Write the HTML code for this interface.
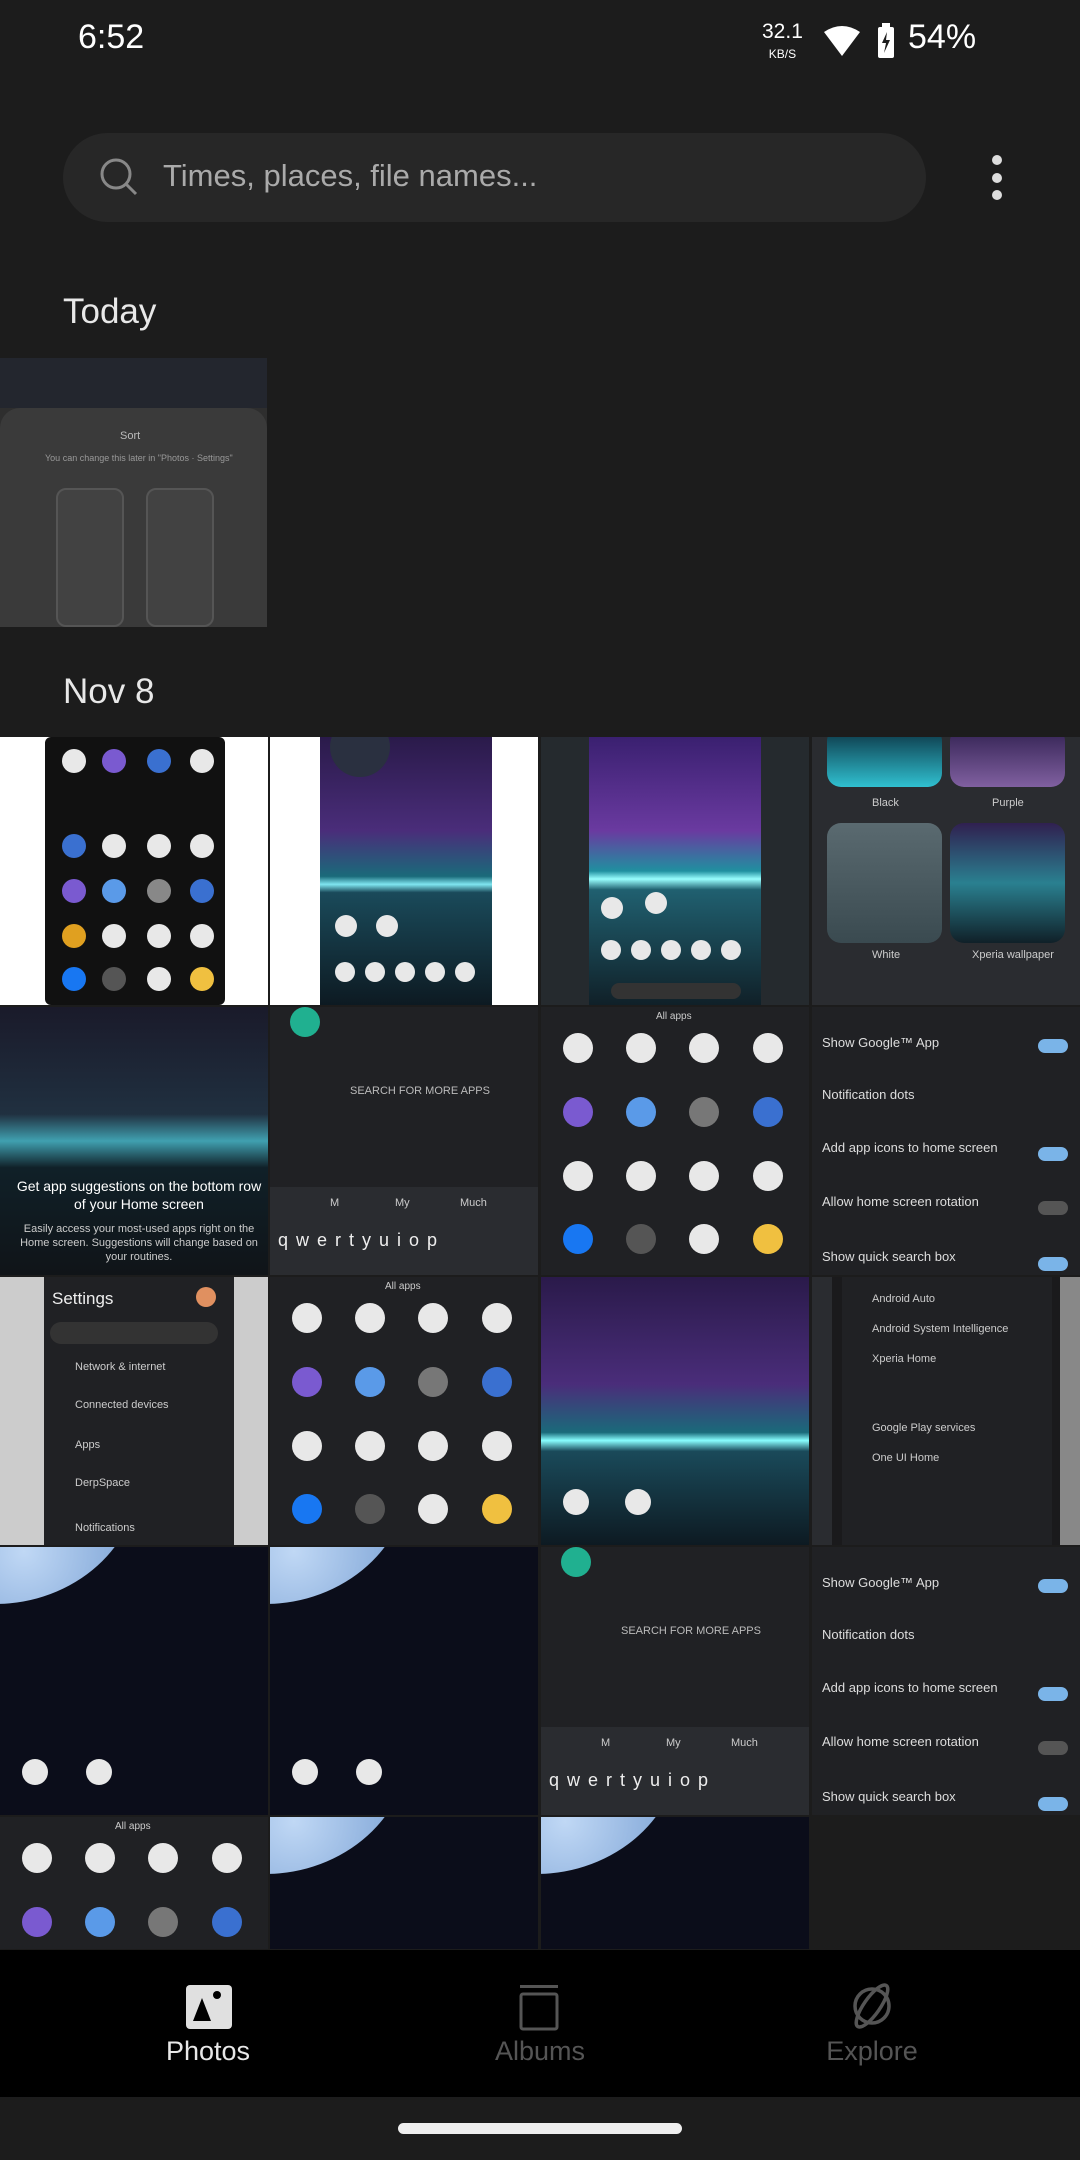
<!DOCTYPE html>
<html><head><meta charset="utf-8"><style>
*{margin:0;padding:0;box-sizing:border-box}
body{width:1080px;height:2160px;background:#1c1c1c;font-family:"Liberation Sans",sans-serif;position:relative;overflow:hidden;color:#fff}
.a{position:absolute}
.c{position:absolute;width:268px;height:268px;overflow:hidden;background:#202124}
.t{position:absolute;font-size:11px;color:#ccc}
.horizon{background:linear-gradient(180deg,#2a1a4a 0%,#4a2d7a 35%,#1a6a7a 52%,#7fe6f0 55%,#1a4a5a 58%,#0d1a22 100%)}
.planet{background:#0b0d1a}
.planet:before{content:"";position:absolute;left:-150px;top:-205px;width:290px;height:262px;border-radius:50%;background:radial-gradient(circle at 60% 80%,#c0d8f5,#5080c0 70%)}
.ic{position:absolute;width:30px;height:30px;border-radius:50%;background:#e8e8e8}
.row{position:absolute;left:10px;right:10px;font-size:13px;color:#ddd}
.tog{position:absolute;right:12px;width:30px;height:14px;border-radius:7px;background:#7ab4e8}
</style></head><body>
<div class="a" style="left:78px;top:18px;font-size:34px;font-weight:500">6:52</div>
<div class="a" style="left:762px;top:22px;font-size:21px;line-height:20px;text-align:center">32.1<br><span style="font-size:12px">KB/S</span></div>
<svg class="a" style="left:822px;top:24px" width="40" height="34" viewBox="0 0 40 34"><path d="M2 8 Q20 -4 38 8 L20 32 Z" fill="#fff"/></svg>
<svg class="a" style="left:875px;top:22px" width="22" height="38" viewBox="0 0 22 38"><rect x="3" y="5" width="16" height="31" rx="2" fill="#fff"/><rect x="7" y="1" width="8" height="5" fill="#fff"/><path d="M12 10 L7 21 H11 L9 31 L15 18 H11 Z" fill="#1c1c1c"/></svg>
<div class="a" style="left:908px;top:18px;font-size:34px;font-weight:500">54%</div>

<div class="a" style="left:63px;top:133px;width:863px;height:89px;border-radius:45px;background:#272727"></div>
<svg class="a" style="left:98px;top:156px" width="42" height="42" viewBox="0 0 42 42"><circle cx="18" cy="18" r="14" fill="none" stroke="#888" stroke-width="3"/><path d="M28 28 L38 38" stroke="#888" stroke-width="3"/></svg>
<div class="a" style="left:163px;top:158px;font-size:31px;color:#aaa">Times, places, file names...</div>
<div class="a" style="left:992px;top:155px;width:10px;height:10px;border-radius:5px;background:#ddd"></div>
<div class="a" style="left:992px;top:173px;width:10px;height:10px;border-radius:5px;background:#ddd"></div>
<div class="a" style="left:992px;top:190px;width:10px;height:10px;border-radius:5px;background:#ddd"></div>

<div class="a" style="left:63px;top:292px;font-size:35px;color:#e8e8e8">Today</div>
<div class="c" style="left:0;top:358px;width:267px;height:269px;background:#2e2e2e">
 <div class="a" style="left:0;top:0;width:267px;height:50px;background:#23262e"></div>
 <div class="a" style="left:0;top:50px;width:267px;height:219px;background:#3a3a3a;border-radius:20px 20px 0 0"></div>
 <div class="t" style="left:120px;top:72px;color:#bbb">Sort</div>
 <div class="t" style="left:45px;top:95px;font-size:9px;color:#999">You can change this later in "Photos · Settings"</div>
 <div class="a" style="left:56px;top:130px;width:68px;height:139px;border:2px solid #555;border-radius:10px;background:#424242"></div>
 <div class="a" style="left:146px;top:130px;width:68px;height:139px;border:2px solid #555;border-radius:10px;background:#424242"></div>
</div>

<div class="a" style="left:63px;top:672px;font-size:35px;color:#e8e8e8">Nov 8</div>

<!-- row1 -->
<div class="c" style="left:0;top:737px;background:#fff"><div class="a" style="left:45px;top:0;width:180px;height:268px;background:#111;border-radius:6px"></div>
 <div class="ic" style="left:62px;top:12px;width:24px;height:24px"></div><div class="ic" style="left:102px;top:12px;width:24px;height:24px;background:#7a5ad0"></div><div class="ic" style="left:147px;top:12px;width:24px;height:24px;background:#3a70d0"></div><div class="ic" style="left:190px;top:12px;width:24px;height:24px"></div>
 <div class="ic" style="left:62px;top:97px;width:24px;height:24px;background:#3a70d0"></div><div class="ic" style="left:102px;top:97px;width:24px;height:24px"></div><div class="ic" style="left:147px;top:97px;width:24px;height:24px"></div><div class="ic" style="left:190px;top:97px;width:24px;height:24px"></div>
 <div class="ic" style="left:62px;top:142px;width:24px;height:24px;background:#7a5ad0"></div><div class="ic" style="left:102px;top:142px;width:24px;height:24px;background:#5a9ae8"></div><div class="ic" style="left:147px;top:142px;width:24px;height:24px;background:#888"></div><div class="ic" style="left:190px;top:142px;width:24px;height:24px;background:#3a70d0"></div>
 <div class="ic" style="left:62px;top:187px;width:24px;height:24px;background:#e0a020"></div><div class="ic" style="left:102px;top:187px;width:24px;height:24px"></div><div class="ic" style="left:147px;top:187px;width:24px;height:24px"></div><div class="ic" style="left:190px;top:187px;width:24px;height:24px"></div>
 <div class="ic" style="left:62px;top:230px;width:24px;height:24px;background:#1877f2"></div><div class="ic" style="left:102px;top:230px;width:24px;height:24px;background:#555"></div><div class="ic" style="left:147px;top:230px;width:24px;height:24px"></div><div class="ic" style="left:190px;top:230px;width:24px;height:24px;background:#f0c040"></div>
</div>
<div class="c" style="left:270px;top:737px;background:#fff"><div class="a horizon" style="left:50px;top:0;width:172px;height:268px"></div>
 <div class="a" style="left:60px;top:-20px;width:60px;height:60px;border-radius:50%;background:#2a3040"></div>
 <div class="ic" style="left:65px;top:178px;width:22px;height:22px"></div><div class="ic" style="left:106px;top:178px;width:22px;height:22px"></div>
 <div class="ic" style="left:65px;top:225px;width:20px;height:20px"></div><div class="ic" style="left:95px;top:225px;width:20px;height:20px"></div><div class="ic" style="left:125px;top:225px;width:20px;height:20px"></div><div class="ic" style="left:155px;top:225px;width:20px;height:20px"></div><div class="ic" style="left:185px;top:225px;width:20px;height:20px"></div></div>
<div class="c" style="left:541px;top:737px;background:#252a2e"><div class="a horizon" style="left:48px;top:0;width:172px;height:268px;background:linear-gradient(180deg,#3a2070 0%,#6a3aa0 35%,#2090a0 50%,#9ff 53%,#206070 57%,#102028 100%)"></div>
 <div class="ic" style="left:60px;top:160px;width:22px;height:22px"></div><div class="ic" style="left:104px;top:155px;width:22px;height:22px"></div>
 <div class="ic" style="left:60px;top:203px;width:20px;height:20px"></div><div class="ic" style="left:90px;top:203px;width:20px;height:20px"></div><div class="ic" style="left:120px;top:203px;width:20px;height:20px"></div><div class="ic" style="left:150px;top:203px;width:20px;height:20px"></div><div class="ic" style="left:180px;top:203px;width:20px;height:20px"></div>
 <div class="a" style="left:70px;top:246px;width:130px;height:16px;border-radius:8px;background:#333"></div></div>
<div class="c" style="left:812px;top:737px;background:#2a2c30">
 <div class="a" style="left:15px;top:-10px;width:115px;height:60px;border-radius:14px;background:linear-gradient(#0a3040,#30c0d0)"></div>
 <div class="a" style="left:138px;top:-10px;width:115px;height:60px;border-radius:14px;background:linear-gradient(#302050,#8060a0)"></div>
 <div class="t" style="left:60px;top:60px">Black</div><div class="t" style="left:180px;top:60px">Purple</div>
 <div class="a" style="left:15px;top:86px;width:115px;height:120px;border-radius:14px;background:linear-gradient(#5a6a70,#3a4a50)"></div>
 <div class="a" style="left:138px;top:86px;width:115px;height:120px;border-radius:14px;background:linear-gradient(#302050,#2a8090 50%,#102028)"></div>
 <div class="t" style="left:60px;top:212px">White</div><div class="t" style="left:160px;top:212px">Xperia wallpaper</div></div>

<!-- row2 -->
<div class="c" style="left:0;top:1007px;background:linear-gradient(180deg,#1a1a2a 0%,#203040 40%,#40a0b0 50%,#102028 60%,#101418 100%)">
 <div class="t" style="left:14px;top:170px;font-size:14px;color:#fff;width:250px;text-align:center;line-height:18px">Get app suggestions on the bottom row of your Home screen</div>
 <div class="t" style="left:14px;top:215px;width:250px;text-align:center;line-height:14px">Easily access your most-used apps right on the Home screen. Suggestions will change based on your routines.</div></div>
<div class="c" style="left:270px;top:1007px">
 <div class="ic" style="left:20px;top:0;background:#20b090"></div>
 <div class="t" style="left:80px;top:78px;color:#bbb">SEARCH FOR MORE APPS</div>
 <div class="a" style="left:0;top:180px;width:268px;height:88px;background:#2a2c30"></div>
 <div class="t" style="left:60px;top:190px">M</div><div class="t" style="left:125px;top:190px">My</div><div class="t" style="left:190px;top:190px">Much</div>
 <div class="t" style="left:8px;top:223px;font-size:18px;letter-spacing:8px;color:#eee">qwertyuiop</div></div>
<div class="c" style="left:541px;top:1007px">
 <div class="t" style="left:115px;top:4px;font-size:10px">All apps</div>
 <div class="ic" style="left:22px;top:26px"></div><div class="ic" style="left:85px;top:26px"></div><div class="ic" style="left:148px;top:26px"></div><div class="ic" style="left:212px;top:26px"></div>
 <div class="ic" style="left:22px;top:90px;background:#7a5ad0"></div><div class="ic" style="left:85px;top:90px;background:#5a9ae8"></div><div class="ic" style="left:148px;top:90px;background:#777"></div><div class="ic" style="left:212px;top:90px;background:#3a70d0"></div>
 <div class="ic" style="left:22px;top:154px"></div><div class="ic" style="left:85px;top:154px"></div><div class="ic" style="left:148px;top:154px"></div><div class="ic" style="left:212px;top:154px"></div>
 <div class="ic" style="left:22px;top:217px;background:#1877f2"></div><div class="ic" style="left:85px;top:217px;background:#555"></div><div class="ic" style="left:148px;top:217px"></div><div class="ic" style="left:212px;top:217px;background:#f0c040"></div></div>
<div class="c" style="left:812px;top:1007px">
 <div class="row" style="top:28px">Show Google™ App</div><div class="tog" style="top:32px"></div>
 <div class="row" style="top:80px">Notification dots</div>
 <div class="row" style="top:133px">Add app icons to home screen</div><div class="tog" style="top:140px"></div>
 <div class="row" style="top:187px">Allow home screen rotation</div><div class="tog" style="top:194px;background:#555"></div>
 <div class="row" style="top:242px">Show quick search box</div><div class="tog" style="top:250px"></div></div>

<!-- row3 -->
<div class="c" style="left:0;top:1277px;background:#ccc">
 <div class="a" style="left:44px;top:0;width:190px;height:268px;background:#202124"></div>
 <div class="t" style="left:52px;top:12px;font-size:17px;color:#eee">Settings</div>
 <div class="a" style="left:196px;top:10px;width:20px;height:20px;border-radius:50%;background:#e09060"></div>
 <div class="a" style="left:50px;top:45px;width:168px;height:22px;border-radius:11px;background:#333"></div>
 <div class="t" style="left:75px;top:84px">Network &amp; internet</div>
 <div class="t" style="left:75px;top:122px">Connected devices</div>
 <div class="t" style="left:75px;top:162px">Apps</div>
 <div class="t" style="left:75px;top:200px">DerpSpace</div>
 <div class="t" style="left:75px;top:245px">Notifications</div></div>
<div class="c" style="left:270px;top:1277px">
 <div class="t" style="left:115px;top:4px;font-size:10px">All apps</div>
 <div class="ic" style="left:22px;top:26px"></div><div class="ic" style="left:85px;top:26px"></div><div class="ic" style="left:148px;top:26px"></div><div class="ic" style="left:212px;top:26px"></div>
 <div class="ic" style="left:22px;top:90px;background:#7a5ad0"></div><div class="ic" style="left:85px;top:90px;background:#5a9ae8"></div><div class="ic" style="left:148px;top:90px;background:#777"></div><div class="ic" style="left:212px;top:90px;background:#3a70d0"></div>
 <div class="ic" style="left:22px;top:154px"></div><div class="ic" style="left:85px;top:154px"></div><div class="ic" style="left:148px;top:154px"></div><div class="ic" style="left:212px;top:154px"></div>
 <div class="ic" style="left:22px;top:217px;background:#1877f2"></div><div class="ic" style="left:85px;top:217px;background:#555"></div><div class="ic" style="left:148px;top:217px"></div><div class="ic" style="left:212px;top:217px;background:#f0c040"></div></div>
<div class="c" style="left:541px;top:1277px;background:linear-gradient(180deg,#2a1a4a 0%,#4a2d7a 40%,#1a6a7a 58%,#8ff 61%,#1a4a5a 65%,#0d1a22 100%)">
 <div class="ic" style="left:22px;top:212px;width:26px;height:26px"></div><div class="ic" style="left:84px;top:212px;width:26px;height:26px"></div></div>
<div class="c" style="left:812px;top:1277px;background:#1a1a1c">
 <div class="a" style="left:0;top:0;width:20px;height:268px;background:#2a2c30"></div>
 <div class="a" style="left:30px;top:0;width:210px;height:268px;background:#202124"></div>
 <div class="t" style="left:60px;top:16px">Android Auto</div>
 <div class="t" style="left:60px;top:46px">Android System Intelligence</div>
 <div class="t" style="left:60px;top:76px">Xperia Home</div>
 <div class="t" style="left:60px;top:145px">Google Play services</div>
 <div class="t" style="left:60px;top:175px">One UI Home</div>
 <div class="a" style="left:248px;top:0;width:20px;height:268px;background:#888"></div></div>

<!-- row4 -->
<div class="c planet" style="left:0;top:1547px"><div class="ic" style="left:22px;top:212px;width:26px;height:26px"></div><div class="ic" style="left:86px;top:212px;width:26px;height:26px"></div></div>
<div class="c planet" style="left:270px;top:1547px"><div class="ic" style="left:22px;top:212px;width:26px;height:26px"></div><div class="ic" style="left:86px;top:212px;width:26px;height:26px"></div></div>
<div class="c" style="left:541px;top:1547px">
 <div class="ic" style="left:20px;top:0;background:#20b090"></div>
 <div class="t" style="left:80px;top:78px;color:#bbb">SEARCH FOR MORE APPS</div>
 <div class="a" style="left:0;top:180px;width:268px;height:88px;background:#2a2c30"></div>
 <div class="t" style="left:60px;top:190px">M</div><div class="t" style="left:125px;top:190px">My</div><div class="t" style="left:190px;top:190px">Much</div>
 <div class="t" style="left:8px;top:223px;font-size:18px;letter-spacing:8px;color:#eee">qwertyuiop</div></div>
<div class="c" style="left:812px;top:1547px">
 <div class="row" style="top:28px">Show Google™ App</div><div class="tog" style="top:32px"></div>
 <div class="row" style="top:80px">Notification dots</div>
 <div class="row" style="top:133px">Add app icons to home screen</div><div class="tog" style="top:140px"></div>
 <div class="row" style="top:187px">Allow home screen rotation</div><div class="tog" style="top:194px;background:#555"></div>
 <div class="row" style="top:242px">Show quick search box</div><div class="tog" style="top:250px"></div></div>

<!-- row5 -->
<div class="c" style="left:0;top:1817px;height:132px">
 <div class="t" style="left:115px;top:4px;font-size:10px">All apps</div>
 <div class="ic" style="left:22px;top:26px"></div><div class="ic" style="left:85px;top:26px"></div><div class="ic" style="left:148px;top:26px"></div><div class="ic" style="left:212px;top:26px"></div>
 <div class="ic" style="left:22px;top:90px;background:#7a5ad0"></div><div class="ic" style="left:85px;top:90px;background:#5a9ae8"></div><div class="ic" style="left:148px;top:90px;background:#777"></div><div class="ic" style="left:212px;top:90px;background:#3a70d0"></div></div>
<div class="c planet" style="left:270px;top:1817px;height:132px"></div>
<div class="c planet" style="left:541px;top:1817px;height:132px"></div>

<!-- nav -->
<div class="a" style="left:0;top:1950px;width:1080px;height:147px;background:#000"></div>
<svg class="a" style="left:184px;top:1983px" width="50" height="48" viewBox="0 0 50 48"><rect x="2" y="2" width="46" height="44" rx="4" fill="#e0e0e0"/><path d="M9 38 L18 15 L27 38 Z" fill="#000"/><circle cx="33" cy="12" r="4" fill="#000"/></svg>
<div class="a" style="left:0;top:2036px;width:416px;text-align:center;font-size:27px;color:#e8e8e8">Photos</div>
<svg class="a" style="left:514px;top:1983px" width="50" height="48" viewBox="0 0 50 48"><rect x="6" y="2" width="38" height="3" fill="#555"/><rect x="7" y="11" width="36" height="35" rx="2" fill="none" stroke="#555" stroke-width="3"/></svg>
<div class="a" style="left:332px;top:2036px;width:416px;text-align:center;font-size:27px;color:#555">Albums</div>
<svg class="a" style="left:845px;top:1980px" width="54" height="52" viewBox="0 0 54 52"><circle cx="27" cy="26" r="17" fill="none" stroke="#555" stroke-width="3.5"/><ellipse cx="27" cy="26" rx="25" ry="8" transform="rotate(-55 27 26)" fill="none" stroke="#555" stroke-width="3.5"/></svg>
<div class="a" style="left:664px;top:2036px;width:416px;text-align:center;font-size:27px;color:#555">Explore</div>
<div class="a" style="left:398px;top:2123px;width:284px;height:11px;border-radius:6px;background:#eee"></div>
</body></html>
